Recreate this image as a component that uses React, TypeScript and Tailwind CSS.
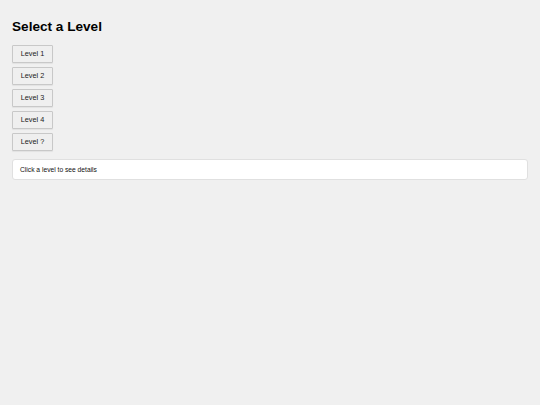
import { useState } from 'react'

const levels = ['Level 1', 'Level 2', 'Level 3', 'Level 4', 'Level ?']

export default function App() {
  const [selected, setSelected] = useState<string | null>(null)

  return (
    <div className="min-h-[405px] bg-[#f0f0f0] px-3 pt-[19px] font-['Liberation_Sans',Arial,sans-serif] text-black">
      <h1 className="text-[13.6px] font-bold leading-[16px]">Select a Level</h1>

      <div className="mt-[10px] flex flex-col items-start gap-1">
        {levels.map((lvl) => (
          <button
            key={lvl}
            onClick={() => setSelected(lvl)}
            className="h-[18px] w-[41px] rounded-[1px] border border-[#c8c8c8] bg-[#efefef] text-[7.3px] leading-none text-[#222] shadow-[0_1px_1px_rgba(0,0,0,0.06)]"
          >
            {lvl}
          </button>
        ))}
      </div>

      <div className="mt-2 flex h-[21px] items-center rounded-[3px] border border-[#e0e0e0] bg-white px-[7px] pt-px text-[6.7px] text-[#111]">
        {selected ? `You selected ${selected}` : 'Click a level to see details'}
      </div>
    </div>
  )
}
